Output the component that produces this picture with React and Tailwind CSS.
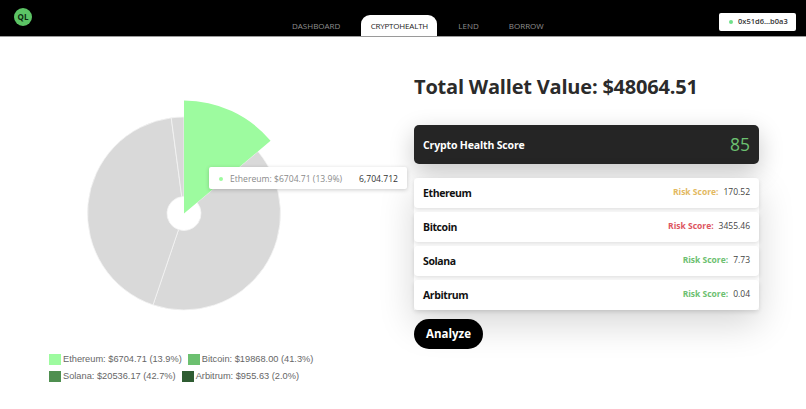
const legend = [
  [
    { color: "bg-[#9dfb9f]", label: "Ethereum: $6704.71 (13.9%)" },
    { color: "bg-[#6cc070]", label: "Bitcoin: $19868.00 (41.3%)" },
  ],
  [
    { color: "bg-[#4f8f50]", label: "Solana: $20536.17 (42.7%)" },
    { color: "bg-[#2f5c32]", label: "Arbitrum: $955.63 (2.0%)" },
  ],
]

const tokens = [
  { name: "Ethereum", risk: "170.52", color: "text-[#e3b95f]" },
  { name: "Bitcoin", risk: "3455.46", color: "text-[#dd5560]" },
  { name: "Solana", risk: "7.73", color: "text-[#6cc070]" },
  { name: "Arbitrum", risk: "0.04", color: "text-[#6cc070]" },
]

const tabs = ["DASHBOARD", "CRYPTOHEALTH", "LEND", "BORROW"]

const cx = 124
const cy = 118.5

function point(r, deg) {
  const a = (deg * Math.PI) / 180
  return [cx + r * Math.sin(a), cy - r * Math.cos(a)]
}

function slice(inner, outer, from, to) {
  const large = to - from > 180 ? 1 : 0
  const [x1, y1] = point(outer, from)
  const [x2, y2] = point(outer, to)
  const [x3, y3] = point(inner, to)
  const [x4, y4] = point(inner, from)
  return `M${x1} ${y1}A${outer} ${outer} 0 ${large} 1 ${x2} ${y2}L${x3} ${y3}A${inner} ${inner} 0 ${large} 0 ${x4} ${y4}Z`
}

function Pie() {
  return (
    <svg width="250" height="230" viewBox="0 0 250 230" className="block ml-[60px]">
      <path d={slice(17, 96.5, 50, 198.7)} fill="#d9d9d9" stroke="#f4f4f4" strokeWidth="0.8" />
      <path d={slice(17, 96.5, 198.7, 352.4)} fill="#d9d9d9" stroke="#f4f4f4" strokeWidth="0.8" />
      <path d={slice(17, 96.5, 352.4, 360)} fill="#d9d9d9" stroke="#f4f4f4" strokeWidth="0.8" />
      <path d={slice(0.01, 113, 0, 50)} fill="#9dfb9f" />
    </svg>
  )
}

export default function App() {
  return (
    <div className="w-[806px] h-[409px] overflow-hidden bg-white font-['Open_Sans',sans-serif]">
      <header className="relative h-[37px] bg-black border-b border-[#9a9a9a] flex items-end">
        <div className="absolute left-[14px] top-[8px] w-[18px] h-[18px] rounded-full bg-[#5cc465] flex items-center justify-center text-[8px] font-bold text-[#0b2a0f]">
          QL
        </div>
        <nav className="flex items-end gap-[12px] ml-[283px] h-[21px]">
          {tabs.map((tab) => (
            <div
              key={tab}
              className={
                tab === "CRYPTOHEALTH"
                  ? "w-[76px] h-[21px] bg-white rounded-t-[9px] flex items-center justify-center text-[8px] tracking-[-0.2px] text-[#222] font-medium"
                  : "h-[21px] px-[9px] flex items-center text-[8px] text-[#8f8f8f]"
              }
            >
              {tab}
            </div>
          ))}
        </nav>
        <div className="absolute left-[719px] top-[13px] w-[77px] h-[18px] pl-[10px] bg-white rounded-[2px] flex items-center gap-[5px] text-[7.5px] font-semibold text-[#333]">
          <span className="w-[4px] h-[4px] rounded-full bg-[#6ee08a]"></span>
          0x51d6...b0a3
        </div>
      </header>

      <main className="flex">
        <section className="relative w-[414px] shrink-0 pt-[58px]">
          <Pie />
          <div className="absolute left-[209px] top-[130px] w-[198px] h-[22px] pt-[2px] bg-white rounded-[2px] shadow-[0_1px_4px_rgba(0,0,0,0.2)] flex items-center text-[8.6px]">
            <span className="ml-[10px] w-[4px] h-[4px] rounded-full bg-[#9dfb9f]"></span>
            <span className="ml-[7px] text-[#8a8a8a]">Ethereum: $6704.71 (13.9%)</span>
            <span className="ml-auto mr-[9px] text-[#333]">6,704.712</span>
          </div>
          <div className="mt-[29px] ml-[49px] flex flex-col gap-[6px] font-['Liberation_Sans',sans-serif] text-[9.25px] leading-[11px] text-[#666]">
            {legend.map((row, i) => (
              <div key={i} className="flex gap-[6px]">
                {row.map((item) => (
                  <div key={item.label} className="flex items-center gap-[2px]">
                    <span className={`w-[12px] h-[11px] ${item.color}`}></span>
                    <span>{item.label}</span>
                  </div>
                ))}
              </div>
            ))}
          </div>
        </section>

        <section className="w-[345px] pt-[36px]">
          <h1 className="text-[20px] leading-[28px] font-bold tracking-[-0.2px] text-[#2b2b2b]">
            Total Wallet Value: $48064.51
          </h1>
          <div className="mt-[24px] h-[39px] px-[9px] bg-[#252525] rounded-[5px] shadow-[0_8px_24px_rgba(0,0,0,0.22)] flex items-center justify-between">
            <span className="mt-[2px] text-[10.5px] font-bold tracking-[-0.15px] text-white">Crypto Health Score</span>
            <span className="text-[17.5px] text-[#6cc070]">85</span>
          </div>
          <div className="mt-[14px] flex flex-col gap-[4px] shadow-[0_14px_34px_rgba(0,0,0,0.16)]">
            {tokens.map((token) => (
              <div
                key={token.name}
                className="h-[30px] px-[9px] bg-white rounded-[4px] shadow-[0_2px_4px_rgba(0,0,0,0.12)] flex items-center justify-between"
              >
                <span className="mt-[2px] text-[10.5px] font-bold tracking-[-0.4px] text-[#111]">{token.name}</span>
                <span className="mb-[1px] text-[8.5px] text-[#444]">
                  <span className={`font-bold mr-[5px] ${token.color}`}>Risk Score:</span>
                  {token.risk}
                </span>
              </div>
            ))}
          </div>
          <button className="mt-[9px] w-[69px] h-[30px] rounded-full bg-black text-white text-[11.5px] font-bold">
            Analyze
          </button>
        </section>
      </main>
    </div>
  )
}
